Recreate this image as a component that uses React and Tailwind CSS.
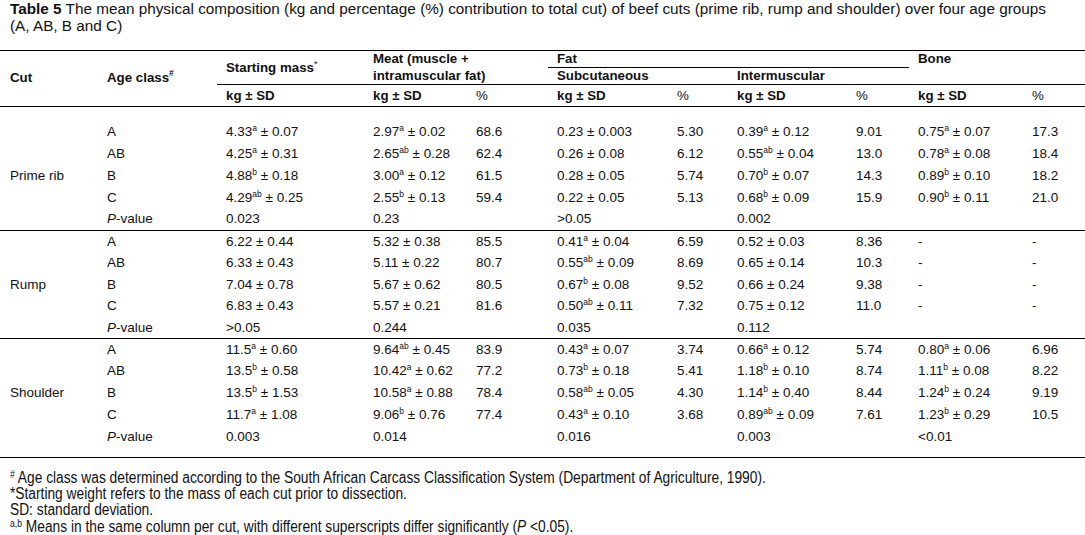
import React from "react";

const V = ({ v }) => {
  if (typeof v === "string") return <>{v}</>;
  const [m, s, sd] = v;
  return (
    <>
      {m}
      {s ? <sup className="text-[8.5px] -top-[5px]">{s}</sup> : null} ± {sd}
    </>
  );
};

const sections = [
  {
    cut: "Prime rib",
    h: "h-[22px]",
    rows: [
      ["A", ["4.33", "a", "0.07"], ["2.97", "a", "0.02"], "68.6", ["0.23", "", "0.003"], "5.30", ["0.39", "a", "0.12"], "9.01", ["0.75", "a", "0.07"], "17.3"],
      ["AB", ["4.25", "a", "0.31"], ["2.65", "ab", "0.28"], "62.4", ["0.26", "", "0.08"], "6.12", ["0.55", "ab", "0.04"], "13.0", ["0.78", "a", "0.08"], "18.4"],
      ["B", ["4.88", "b", "0.18"], ["3.00", "a", "0.12"], "61.5", ["0.28", "", "0.05"], "5.74", ["0.70", "b", "0.07"], "14.3", ["0.89", "b", "0.10"], "18.2"],
      ["C", ["4.29", "ab", "0.25"], ["2.55", "b", "0.13"], "59.4", ["0.22", "", "0.05"], "5.13", ["0.68", "b", "0.09"], "15.9", ["0.90", "b", "0.11"], "21.0"],
    ],
    p: ["0.023", "0.23", ">0.05", "0.002", ""],
  },
  {
    cut: "Rump",
    h: "h-[21.7px]",
    rows: [
      ["A", ["6.22", "", "0.44"], ["5.32", "", "0.38"], "85.5", ["0.41", "a", "0.04"], "6.59", ["0.52", "", "0.03"], "8.36", "-", "-"],
      ["AB", ["6.33", "", "0.43"], ["5.11", "", "0.22"], "80.7", ["0.55", "ab", "0.09"], "8.69", ["0.65", "", "0.14"], "10.3", "-", "-"],
      ["B", ["7.04", "", "0.78"], ["5.67", "", "0.62"], "80.5", ["0.67", "b", "0.08"], "9.52", ["0.66", "", "0.24"], "9.38", "-", "-"],
      ["C", ["6.83", "", "0.43"], ["5.57", "", "0.21"], "81.6", ["0.50", "ab", "0.11"], "7.32", ["0.75", "", "0.12"], "11.0", "-", "-"],
    ],
    p: [">0.05", "0.244", "0.035", "0.112", ""],
  },
  {
    cut: "Shoulder",
    h: "h-[21.7px]",
    rows: [
      ["A", ["11.5", "a", "0.60"], ["9.64", "ab", "0.45"], "83.9", ["0.43", "a", "0.07"], "3.74", ["0.66", "a", "0.12"], "5.74", ["0.80", "a", "0.06"], "6.96"],
      ["AB", ["13.5", "b", "0.58"], ["10.42", "a", "0.62"], "77.2", ["0.73", "b", "0.18"], "5.41", ["1.18", "b", "0.10"], "8.74", ["1.11", "b", "0.08"], "8.22"],
      ["B", ["13.5", "b", "1.53"], ["10.58", "a", "0.88"], "78.4", ["0.58", "ab", "0.05"], "4.30", ["1.14", "b", "0.40"], "8.44", ["1.24", "b", "0.24"], "9.19"],
      ["C", ["11.7", "a", "1.08"], ["9.06", "b", "0.76"], "77.4", ["0.43", "a", "0.10"], "3.68", ["0.89", "ab", "0.09"], "7.61", ["1.23", "b", "0.29"], "10.5"],
    ],
    p: ["0.003", "0.014", "0.016", "0.003", "<0.01"],
  },
];

const td = "pl-[9px] py-0 text-left align-middle whitespace-nowrap";
const th = "pl-[9px] py-0 text-left font-bold whitespace-nowrap";

export default function App() {
  return (
    <div className="w-[1085px] h-[535px] bg-white text-[#111] font-['Liberation_Sans',Arial,sans-serif] overflow-hidden">
      <div className="pl-[10px] text-[15.3px] leading-[17px] whitespace-nowrap">
        <span className="font-bold">Table 5</span> The mean physical composition (kg and percentage (%) contribution to total cut) of beef cuts (prime rib, rump and shoulder) over four age groups
        <br />
        (A, AB, B and C)
      </div>
      <table className="mt-[16px] w-[1085px] table-fixed border-collapse text-[13.5px] leading-[16px]">
        <colgroup>
          <col className="w-[98px]" />
          <col className="w-[119px]" />
          <col className="w-[147px]" />
          <col className="w-[103px]" />
          <col className="w-[81px]" />
          <col className="w-[120px]" />
          <col className="w-[60px]" />
          <col className="w-[119px]" />
          <col className="w-[62px]" />
          <col className="w-[114px]" />
          <col className="w-[62px]" />
        </colgroup>
        <thead className="text-[13.3px]">
          <tr className="h-[16px]">
            <th rowSpan={3} className={`${th} !pl-[10px] align-middle border-t border-b border-black pb-[2px]`}>Cut</th>
            <th rowSpan={3} className={`${th} align-middle border-t border-b border-black pb-[2px]`}>
              Age class<sup className="text-[8.5px] -top-[6px]">#</sup>
            </th>
            <th rowSpan={2} className={`${th} align-middle border-t border-b border-black`}>
              Starting mass<sup className="text-[9px] font-normal -top-[5px]">*</sup>
            </th>
            <th rowSpan={2} colSpan={2} className={`${th} align-middle border-t border-b border-black leading-[16.5px]`}>
              Meat (muscle +<br />intramuscular fat)
            </th>
            <th colSpan={4} className={`${th} align-top border-t border-b border-black leading-[16px]`}>Fat</th>
            <th rowSpan={2} colSpan={2} className={`${th} align-top border-t border-b border-black leading-[16px]`}>Bone</th>
          </tr>
          <tr className="h-[17px]">
            <th colSpan={2} className={`${th} align-middle border-b border-black leading-[16px]`}>Subcutaneous</th>
            <th colSpan={2} className={`${th} align-middle border-b border-black leading-[16px]`}>Intermuscular</th>
          </tr>
          <tr className="h-[22px]">
            <th className={`${th} border-b border-black`}>kg ± SD</th>
            <th className={`${th} border-b border-black`}>kg ± SD</th>
            <th className={`${th} border-b border-black font-normal`}>%</th>
            <th className={`${th} border-b border-black`}>kg ± SD</th>
            <th className={`${th} border-b border-black font-normal`}>%</th>
            <th className={`${th} border-b border-black`}>kg ± SD</th>
            <th className={`${th} border-b border-black font-normal`}>%</th>
            <th className={`${th} border-b border-black`}>kg ± SD</th>
            <th className={`${th} border-b border-black font-normal`}>%</th>
          </tr>
        </thead>
        {sections.map((sec, si) => {
          const last = si === 2;
          const b = last ? "" : "border-b border-black";
          return (
            <tbody key={sec.cut}>
              {si === 0 && (
                <tr className="h-[14px]">
                  <td colSpan={11} />
                </tr>
              )}
              {sec.rows.map((r) => (
                <tr key={r[0]} className={sec.h}>
                  <td className={`${td} !pl-[10px]`}>{r[0] === "B" ? sec.cut : ""}</td>
                  {r.map((c, i) => (
                    <td key={i} className={td}>
                      <V v={c} />
                    </td>
                  ))}
                </tr>
              ))}
              <tr className={sec.h}>
                <td className={`${td} ${b}`} />
                <td className={`${td} ${b}`}>
                  <i>P</i>-value
                </td>
                <td className={`${td} ${b}`}>{sec.p[0]}</td>
                <td className={`${td} ${b}`}>{sec.p[1]}</td>
                <td className={`${td} ${b}`} />
                <td className={`${td} ${b}`}>{sec.p[2]}</td>
                <td className={`${td} ${b}`} />
                <td className={`${td} ${b}`}>{sec.p[3]}</td>
                <td className={`${td} ${b}`} />
                <td className={`${td} ${b}`}>{sec.p[4]}</td>
                <td className={`${td} ${b}`} />
              </tr>
              {last && (
                <tr className="h-[10px]">
                  <td colSpan={11} className="border-b border-black" />
                </tr>
              )}
            </tbody>
          );
        })}
      </table>
      <div className="mt-[12px] pl-[10px] text-[16px] leading-[16.3px] whitespace-nowrap">
        <div className="origin-left scale-x-[0.86]">
          <sup className="text-[10px] -top-[5px]">#</sup> Age class was determined according to the South African Carcass Classification System (Department of Agriculture, 1990).
        </div>
        <div className="origin-left scale-x-[0.86]">*Starting weight refers to the mass of each cut prior to dissection.</div>
        <div className="origin-left scale-x-[0.86]">SD: standard deviation.</div>
        <div className="origin-left scale-x-[0.86]">
          <sup className="text-[10px] -top-[5px]">a,b</sup> Means in the same column per cut, with different superscripts differ significantly (<i>P</i> &lt;0.05).
        </div>
      </div>
    </div>
  );
}
